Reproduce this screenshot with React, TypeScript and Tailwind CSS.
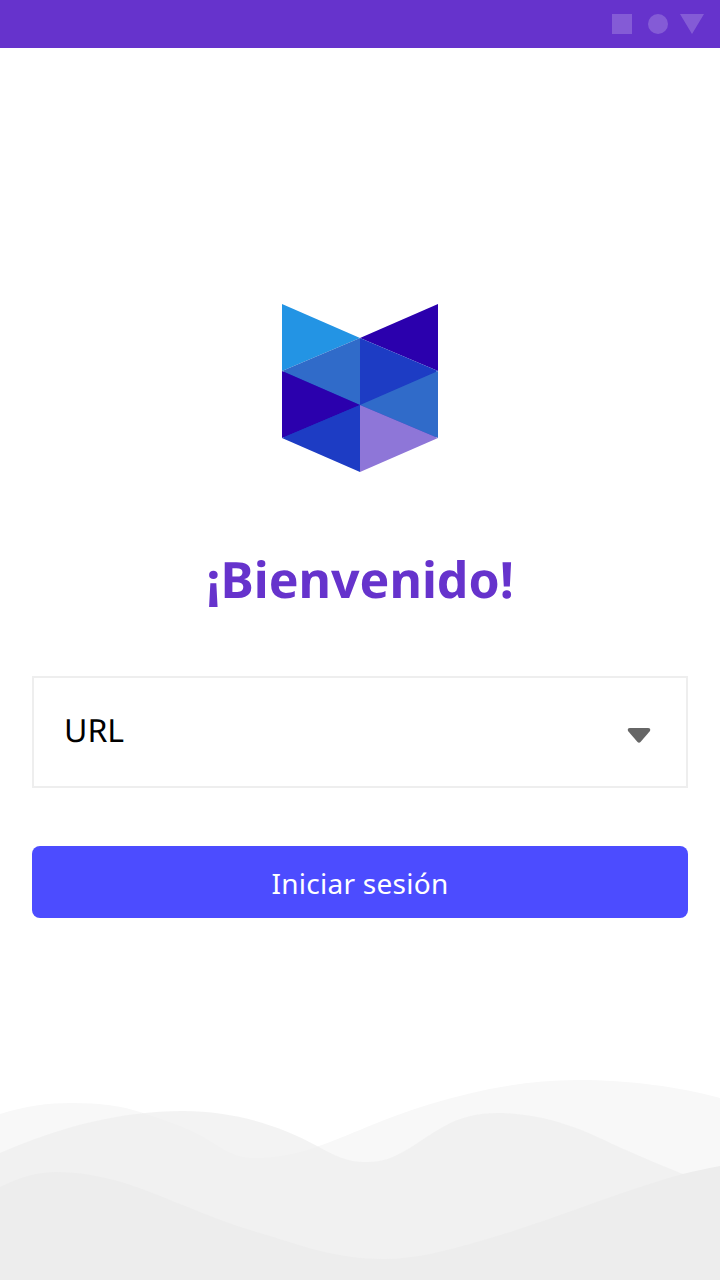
import React from 'react'

const Logo: React.FC = () => (
  <svg width="156" height="168" viewBox="282 304 156 168" className="block">
    <polygon points="284,371 360,340 436,371 436,437 360,470 284,437" fill="#1d3cc4" />
    <polygon points="282,304 360,338 282,371" fill="#2394e4" />
    <polygon points="438,304 360,338 438,371" fill="#2b00ad" />
    <polygon points="282,371 360,338 360,405" fill="#306bc9" />
    <polygon points="360,338 438,371 360,405" fill="#1d3cc4" />
    <polygon points="282,371 360,405 282,438" fill="#2b00ad" />
    <polygon points="360,405 438,371 438,438" fill="#306bc9" />
    <polygon points="282,438 360,405 360,472" fill="#1d3cc4" />
    <polygon points="360,405 438,438 360,472" fill="#8e76d8" />
  </svg>
)

const Waves: React.FC = () => (
  <svg width="720" height="200" viewBox="0 1080 720 200" className="block shrink-0">
    <path
      d="M0 1114 C25 1106 48 1103 72 1103 C100 1103 122 1106 140 1112 C165 1120 185 1127 200 1135 C220 1146 232 1158 255 1158 C295 1158 325 1144 360 1130 C420 1104 500 1080 577 1080 C630 1080 680 1087 720 1098 V1280 H0 Z"
      fill="#f8f8f8"
    />
    <path
      d="M0 1153 C60 1127 120 1111 183 1111 C235 1111 280 1126 317 1146 C335 1156 348 1162 364 1162 C378 1162 386 1160 395 1156 C412 1148 428 1135 443 1127 C460 1117 478 1113 498 1113 C530 1113 565 1122 593 1135 C625 1150 660 1165 683 1174 L720 1190 V1280 H0 Z"
      fill="#eeeeee"
      fillOpacity="0.72"
    />
    <path
      d="M0 1187 C20 1177 38 1172 57 1172 C90 1172 122 1181 150 1192 C168 1199 185 1206 200 1212 C222 1221 245 1229 267 1235 C300 1245 335 1259 385 1259 C415 1259 445 1251 477 1242 C505 1234 532 1225 560 1215 C600 1201 645 1184 683 1174 C695 1171 708 1168 720 1166 V1280 H0 Z"
      fill="#ededed"
    />
  </svg>
)

export default function App() {
  return (
    <div className="w-[720px] h-[1280px] flex flex-col bg-white overflow-hidden font-['Noto_Sans',sans-serif] [text-rendering:geometricPrecision]">
      <div className="h-12 shrink-0 bg-[#6633cc] flex items-center justify-end pr-4">
        <div className="w-5 h-5 bg-white/20" />
        <div className="w-5 h-5 ml-4 rounded-full bg-white/20" />
        <svg width="24" height="20" viewBox="0 0 24 20" className="block ml-3">
          <polygon points="0,0 24,0 12,20" fill="#ffffff" fillOpacity="0.2" />
        </svg>
      </div>

      <div className="flex flex-col items-center px-8 pt-[256px]">
        <Logo />
        <h1 className="mt-[74px] text-[50px] leading-[66px] font-bold text-[#6633cc]">¡Bienvenido!</h1>

        <div className="mt-[64px] w-full h-[112px] border-2 border-[#eeeeee] flex items-center justify-between pl-[30px] pr-[35px]">
          <span className="text-[32px] leading-[44px] text-black -mt-[3px]">URL</span>
          <svg width="24" height="16" viewBox="0 0 24 16" className="block mt-[8px]">
            <path d="M3 0 H21 Q24 0 23 3 L13.5 14 Q12 15.5 10.5 14 L1 3 Q0 0 3 0 Z" fill="#666666" />
          </svg>
        </div>

        <button className="mt-[58px] w-full h-[72px] rounded-lg bg-[#4c4cff] text-white text-[28px] leading-[38px] tracking-[0.28px] pt-[2px]">
          Iniciar sesión
        </button>
      </div>

      <div className="mt-auto">
        <Waves />
      </div>
    </div>
  )
}
